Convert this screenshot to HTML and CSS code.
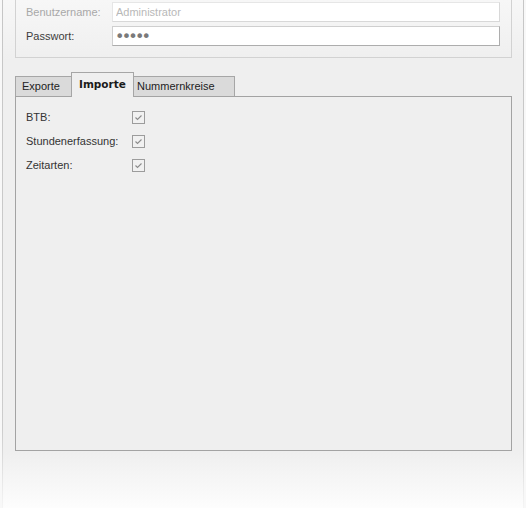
FILE: index.html
```html
<!doctype html>
<html lang="de">
<head>
    <meta charset="UTF-8">
    <title>Einstellungen</title>
    <link rel="stylesheet" href="styles.css">
</head>
<body>
    <div class="window">
        <div class="login">
            <div class="row">
                <label class="disabled">Benutzername:</label>
                <input class="field" type="text" value="Administrator" disabled>
            </div>
            <div class="row">
                <label>Passwort:</label>
                <input class="field" type="password" value="admin">
            </div>
        </div>

        <div class="tabs">
            <span class="tab tab-first">Exporte</span>
            <span class="tab active">Importe</span>
            <span class="tab tab-last">Nummernkreise</span>
        </div>
        <div class="panel">
            <div class="option">
                <span>BTB:</span>
                <span class="check"><svg width="11" height="11" viewBox="0 0 11 11"><path d="M2.5 5.5 L4.5 7.5 L8.5 3.5" fill="none" stroke="#8c8c8c" stroke-width="1.1"/></svg></span>
            </div>
            <div class="option">
                <span>Stundenerfassung:</span>
                <span class="check"><svg width="11" height="11" viewBox="0 0 11 11"><path d="M2.5 5.5 L4.5 7.5 L8.5 3.5" fill="none" stroke="#8c8c8c" stroke-width="1.1"/></svg></span>
            </div>
            <div class="option">
                <span>Zeitarten:</span>
                <span class="check"><svg width="11" height="11" viewBox="0 0 11 11"><path d="M2.5 5.5 L4.5 7.5 L8.5 3.5" fill="none" stroke="#8c8c8c" stroke-width="1.1"/></svg></span>
            </div>
        </div>
    </div>
</body>
</html>
```

FILE: styles.css
```css
* {
    margin: 0;
    padding: 0;
    box-sizing: border-box;
}
body {
    background-color: #f8f8f8;
    font: 11px "Liberation Sans", Arial, sans-serif;
    color: #333;
}
.window {
    height: 508px;
    margin: 0 2px;
    padding: 0 11px 0 12px;
    border-left: 1px solid #c8c8c8;
    border-right: 1px solid #c8c8c8;
    border-image: linear-gradient(#c6c6c6 0, #cdcdcd 430px, #f6f6f6 508px) 1;
    background: linear-gradient(#f7f7f7 0, #efefef 60px, #efefef 452px, #fdfdfd 508px);
}

/* Anmeldedaten */
.login {
    padding: 2px 11px 11px 10px;
    border: 1px solid #d2d2d2;
    border-top: none;
}
.row {
    display: flex;
    align-items: center;
    height: 20px;
}
.row + .row {
    margin-top: 4px;
}
.row label {
    width: 86px;
    color: #3c3c3c;
}
.row label.disabled {
    color: #a8a8a8;
}
.field {
    flex: 1;
    height: 20px;
    padding: 0 3px;
    font: 11px "Liberation Sans", Arial, sans-serif;
    color: #666;
    background-color: #fff;
    border: 1px solid;
    border-color: #cfcfcf #adadad #adadad #cfcfcf;
    outline: none;
}
.field:disabled {
    color: #b8b8b8;
    border-color: #e6e6e6 #d8d8d8 #d8d8d8 #e6e6e6;
}
.field[type=password] {
    padding-left: 2px;
    font: 16px "DejaVu Sans", sans-serif;
    letter-spacing: -2.8px;
    color: #7a7a7a;
}

/* Reiter */
.tabs {
    display: flex;
    align-items: flex-end;
    height: 24px;
    margin-top: 14px;
}
.tab {
    height: 20px;
    line-height: 18px;
    padding-left: 6px;
    color: #222;
    background-color: #dadada;
    border: 1px solid #a6a6a6;
    border-bottom: none;
}
.tab-first {
    width: 56px;
    border-right: none;
}
.tab-last {
    width: 101px;
    padding-left: 3px;
    border-left: none;
}
.tab.active {
    position: relative;
    z-index: 1;
    width: 63px;
    height: 25px;
    margin-bottom: -1px;
    padding-left: 7px;
    font: bold 10.5px/22px "DejaVu Sans", sans-serif;
    color: #1a1a1a;
    background-color: #efefef;
}
.panel {
    height: 355px;
    padding: 13px 10px;
    border: 1px solid #a3a3a3;
}
.option {
    display: flex;
    align-items: center;
    height: 14px;
}
.option + .option {
    margin-top: 10px;
}
.option span:first-child {
    width: 106px;
}
.check {
    display: flex;
    align-items: center;
    justify-content: center;
    width: 13px;
    height: 13px;
    border: 1px solid #9c9c9c;
    background-color: #f1f1f1;
}
```
